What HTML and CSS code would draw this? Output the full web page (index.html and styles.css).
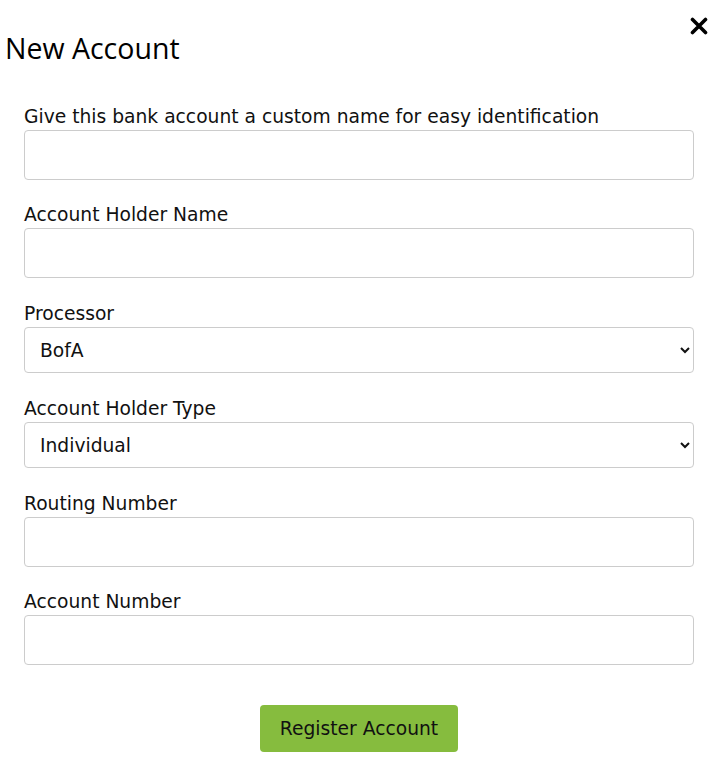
FILE: index.html
```html
<!DOCTYPE html>
<html>
<head>
<meta charset="utf-8">
<link rel="stylesheet" href="styles.css">
</head>
<body>
<div class="modal">
  <div class="modal-header">
    <h1 class="title">New Account</h1>
    <button class="close" aria-label="Close">
      <svg width="18" height="18" viewBox="0 0 18 18"><path d="M2.5 2.5 L15.5 15.5 M15.5 2.5 L2.5 15.5" stroke="#000" stroke-width="3.6" stroke-linecap="round"/></svg>
    </button>
  </div>
  <form class="form">
    <div class="group">
      <label class="label">Give this bank account a custom name for easy identification</label>
      <input class="field" type="text">
    </div>
    <div class="group group-wide">
      <label class="label">Account Holder Name</label>
      <input class="field" type="text">
    </div>
    <div class="group group-wide">
      <label class="label">Processor</label>
      <select class="field select"><option>BofA</option></select>
    </div>
    <div class="group group-wide">
      <label class="label">Account Holder Type</label>
      <select class="field select"><option>Individual</option></select>
    </div>
    <div class="group">
      <label class="label">Routing Number</label>
      <input class="field" type="text">
    </div>
    <div class="group">
      <label class="label">Account Number</label>
      <input class="field" type="text">
    </div>
    <div class="actions">
      <button type="button" class="submit">Register Account</button>
    </div>
  </form>
</div>
</body>
</html>
```
FILE: styles.css
```css
html, body {
  margin: 0;
  padding: 0;
  background: #fff;
}
body {
  font-family: "DejaVu Sans", Verdana, sans-serif;
  color: #111;
}
.modal {
  width: 719px;
  box-sizing: border-box;
}
.modal-header {
  display: flex;
  justify-content: space-between;
  align-items: flex-start;
  padding: 0 10px 0 5px;
}
.title {
  margin: 28px 0 0 0;
  font-family: "Open Sans", sans-serif;
  font-weight: 400;
  font-size: 28.5px;
  line-height: 40px;
  color: #000;
}
.close {
  margin-top: 16px;
  background: none;
  border: 0;
  padding: 0;
  width: 20px;
  height: 20px;
  display: flex;
  align-items: center;
  justify-content: center;
}
.form {
  padding: 37px 25px 0 24px;
}
.group {
  display: flex;
  flex-direction: column;
  margin-bottom: 23px;
}
.group-wide {
  margin-bottom: 24px;
}
.label {
  font-size: 18.7px;
  line-height: 24px;
  margin-bottom: 1px;
}
.field {
  box-sizing: border-box;
  width: 100%;
  height: 50px;
  border: 1px solid #ccc;
  border-radius: 4px;
  background: #fff;
  font-family: "DejaVu Sans", Verdana, sans-serif;
  font-size: 18.7px;
  color: #111;
  padding: 0 14px;
}
.select {
  height: 46px;
  padding-left: 11px;
}
.actions {
  display: flex;
  justify-content: center;
  padding-top: 17px;
}
.submit {
  background: #86bc3e;
  border: 0;
  border-radius: 4px;
  height: 47px;
  padding: 0 20px;
  font-family: "DejaVu Sans", Verdana, sans-serif;
  font-size: 18.7px;
  color: #111;
}
```
